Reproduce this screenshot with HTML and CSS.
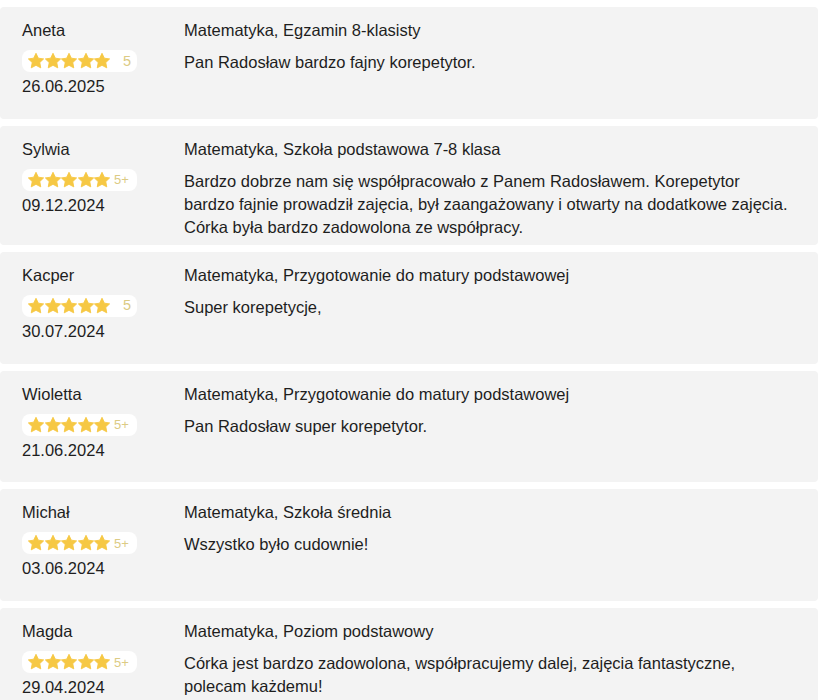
FILE: index.html
```html
<!DOCTYPE html>
<html lang="pl">
<head>
<meta charset="utf-8">
<title>Opinie</title>
<link rel="stylesheet" href="styles.css">
</head>
<body>
<svg width="0" height="0" class="defs" aria-hidden="true">
  <defs>
    <symbol id="star" viewBox="1.4 1.4 21.2 21.2">
      <path d="M12 1.8l3.1 6.5 7 .9-5.1 4.9 1.3 7L12 17.7l-6.3 3.4 1.3-7-5.1-4.9 7-.9z" stroke-linejoin="round" stroke-width="1.2"/>
    </symbol>
  </defs>
</svg>
<div class="list">
  <div class="card">
    <div class="who">
      <div class="name">Aneta</div>
      <div class="badge"><span class="stars"><svg><use href="#star"/></svg><svg><use href="#star"/></svg><svg><use href="#star"/></svg><svg><use href="#star"/></svg><svg><use href="#star"/></svg></span><span class="score">5</span></div>
      <div class="date">26.06.2025</div>
    </div>
    <div class="body">
      <div class="subject">Matematyka, Egzamin 8-klasisty</div>
      <div class="text">Pan Radosław bardzo fajny korepetytor.</div>
    </div>
  </div>
  <div class="card">
    <div class="who">
      <div class="name">Sylwia</div>
      <div class="badge"><span class="stars"><svg><use href="#star"/></svg><svg><use href="#star"/></svg><svg><use href="#star"/></svg><svg><use href="#star"/></svg><svg><use href="#star"/></svg></span><span class="score plus">5+</span></div>
      <div class="date">09.12.2024</div>
    </div>
    <div class="body">
      <div class="subject">Matematyka, Szkoła podstawowa 7-8 klasa</div>
      <div class="text">Bardzo dobrze nam się współpracowało z Panem Radosławem. Korepetytor bardzo fajnie prowadził zajęcia, był zaangażowany i otwarty na dodatkowe zajęcia. Córka była bardzo zadowolona ze współpracy.</div>
    </div>
  </div>
  <div class="card">
    <div class="who">
      <div class="name">Kacper</div>
      <div class="badge"><span class="stars"><svg><use href="#star"/></svg><svg><use href="#star"/></svg><svg><use href="#star"/></svg><svg><use href="#star"/></svg><svg><use href="#star"/></svg></span><span class="score">5</span></div>
      <div class="date">30.07.2024</div>
    </div>
    <div class="body">
      <div class="subject">Matematyka, Przygotowanie do matury podstawowej</div>
      <div class="text">Super korepetycje,</div>
    </div>
  </div>
  <div class="card">
    <div class="who">
      <div class="name">Wioletta</div>
      <div class="badge"><span class="stars"><svg><use href="#star"/></svg><svg><use href="#star"/></svg><svg><use href="#star"/></svg><svg><use href="#star"/></svg><svg><use href="#star"/></svg></span><span class="score plus">5+</span></div>
      <div class="date">21.06.2024</div>
    </div>
    <div class="body">
      <div class="subject">Matematyka, Przygotowanie do matury podstawowej</div>
      <div class="text">Pan Radosław super korepetytor.</div>
    </div>
  </div>
  <div class="card">
    <div class="who">
      <div class="name">Michał</div>
      <div class="badge"><span class="stars"><svg><use href="#star"/></svg><svg><use href="#star"/></svg><svg><use href="#star"/></svg><svg><use href="#star"/></svg><svg><use href="#star"/></svg></span><span class="score plus">5+</span></div>
      <div class="date">03.06.2024</div>
    </div>
    <div class="body">
      <div class="subject">Matematyka, Szkoła średnia</div>
      <div class="text">Wszystko było cudownie!</div>
    </div>
  </div>
  <div class="card">
    <div class="who">
      <div class="name">Magda</div>
      <div class="badge"><span class="stars"><svg><use href="#star"/></svg><svg><use href="#star"/></svg><svg><use href="#star"/></svg><svg><use href="#star"/></svg><svg><use href="#star"/></svg></span><span class="score plus">5+</span></div>
      <div class="date">29.04.2024</div>
    </div>
    <div class="body">
      <div class="subject">Matematyka, Poziom podstawowy</div>
      <div class="text">Córka jest bardzo zadowolona, współpracujemy dalej, zajęcia fantastyczne, polecam każdemu!</div>
    </div>
  </div>
</div>
</body>
</html>
```

FILE: styles.css
```css
html, body {
  margin: 0;
  padding: 0;
  background: #ffffff;
}
body {
  font-family: "Liberation Sans", Arial, sans-serif;
  font-size: 16.5px;
  line-height: 23px;
  color: #1e1e1e;
}
.defs {
  position: absolute;
  width: 0;
  height: 0;
  overflow: hidden;
}
.list {
  display: flex;
  flex-direction: column;
  gap: 7px;
  padding: 7px 6px 0 0;
}
.card {
  display: grid;
  grid-template-columns: 162px 1fr;
  background: #f3f3f3;
  border-radius: 4px;
  padding: 12px 22px 6px 22px;
}
.who {
  display: flex;
  flex-direction: column;
  align-items: flex-start;
  padding-bottom: 14.8px;
}
.body {
  max-width: 608px;
}
.badge {
  margin-top: 8px;
  height: 22px;
  width: 115px;
  box-sizing: border-box;
  display: flex;
  align-items: center;
  background: #ffffff;
  border-radius: 8px;
  padding-left: 6px;
}
.stars {
  display: flex;
  gap: 0.5px;
}
.stars svg {
  width: 16px;
  height: 16px;
  fill: #f6c844;
  stroke: #f6c844;
}
.score {
  margin-left: 13px;
  font-size: 14.5px;
  color: #dccb84;
}
.score.plus {
  margin-left: 4px;
  font-size: 13px;
}
.date {
  margin-top: 3px;
}
.subject {
  margin-bottom: 9px;
}
```
